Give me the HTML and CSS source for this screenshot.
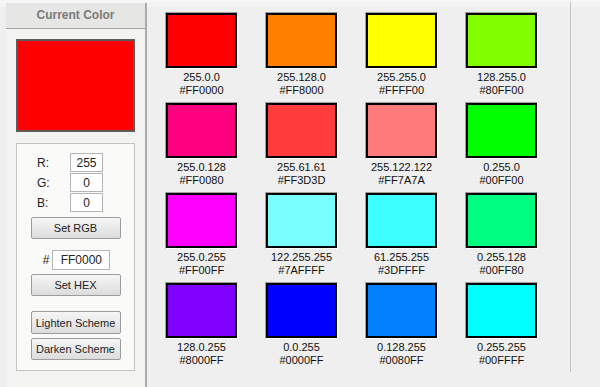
FILE: index.html
```html
<!DOCTYPE html>
<html>
<head>
<title>Color Scheme</title>
<link rel="stylesheet" href="styles.css">
</head>
<body>
<div class="side">
  <div class="side-head">Current Color</div>
  <div class="current" id="current"></div>

  <div class="controls">
    <div class="field"><label for="r">R:</label><input id="r" type="text" value="255"></div>
    <div class="field"><label for="g">G:</label><input id="g" type="text" value="0"></div>
    <div class="field"><label for="b">B:</label><input id="b" type="text" value="0"></div>
    <button class="btn">Set RGB</button>

    <div class="hex-row"><span>#</span><input id="hex" type="text" value="FF0000"></div>
    <button class="btn">Set HEX</button>

    <button class="btn scheme">Lighten Scheme</button>
    <button class="btn scheme-2">Darken Scheme</button>
  </div>
</div>

<div class="palette">
  <div class="item"><div class="swatch" style="background:#FF0000"></div><p>255.0.0<br>#FF0000</p></div>
  <div class="item"><div class="swatch" style="background:#FF8000"></div><p>255.128.0<br>#FF8000</p></div>
  <div class="item"><div class="swatch" style="background:#FFFF00"></div><p>255.255.0<br>#FFFF00</p></div>
  <div class="item"><div class="swatch" style="background:#80FF00"></div><p>128.255.0<br>#80FF00</p></div>

  <div class="item"><div class="swatch" style="background:#FF0080"></div><p>255.0.128<br>#FF0080</p></div>
  <div class="item"><div class="swatch" style="background:#FF3D3D"></div><p>255.61.61<br>#FF3D3D</p></div>
  <div class="item"><div class="swatch" style="background:#FF7A7A"></div><p>255.122.122<br>#FF7A7A</p></div>
  <div class="item"><div class="swatch" style="background:#00FF00"></div><p>0.255.0<br>#00FF00</p></div>

  <div class="item"><div class="swatch" style="background:#FF00FF"></div><p>255.0.255<br>#FF00FF</p></div>
  <div class="item"><div class="swatch" style="background:#7AFFFF"></div><p>122.255.255<br>#7AFFFF</p></div>
  <div class="item"><div class="swatch" style="background:#3DFFFF"></div><p>61.255.255<br>#3DFFFF</p></div>
  <div class="item"><div class="swatch" style="background:#00FF80"></div><p>0.255.128<br>#00FF80</p></div>

  <div class="item"><div class="swatch" style="background:#8000FF"></div><p>128.0.255<br>#8000FF</p></div>
  <div class="item"><div class="swatch" style="background:#0000FF"></div><p>0.0.255<br>#0000FF</p></div>
  <div class="item"><div class="swatch" style="background:#0080FF"></div><p>0.128.255<br>#0080FF</p></div>
  <div class="item"><div class="swatch" style="background:#00FFFF"></div><p>0.255.255<br>#00FFFF</p></div>
</div>
</body>
</html>
```

FILE: styles.css
```css
html, body {
  height: 100%;
}
body {
  margin: 0;
  font-family: "Liberation Sans", Arial, sans-serif;
  background: linear-gradient(#f4f4f4 0, #f4f4f4 7px, #eeefee 7px);
  display: flex;
  align-items: flex-start;
  border-top: 2px solid #f6f6f6;
  box-sizing: border-box;
}
.side {
  align-self: stretch;
  width: 139px;
  margin-left: 6px;
  margin-top: 1px;
  background: #f3f3f1;
  border-right: 2px solid #ababab;
}
.side-head {
  height: 25px;
  line-height: 25px;
  background: #e6e6e4;
  border-bottom: 1px solid #a3a3a3;
  text-align: center;
  font-size: 12px;
  font-weight: bold;
  color: #7a7a7a;
}
.current {
  height: 93px;
  margin: 10px 10px 0;
  box-sizing: border-box;
  background: #ff0000;
  border: 2px solid #5c5c5c;
}
.controls {
  margin: 11px 10px 0;
  padding: 9px 0 10px;
  background: #fafaf8;
  border: 1px solid #c4c4c4;
  display: flex;
  flex-direction: column;
  align-items: center;
}
.field {
  display: flex;
  align-items: center;
  width: 100%;
  padding-left: 20px;
  box-sizing: border-box;
  margin-bottom: 1px;
}
.field label {
  width: 33px;
  font-size: 12px;
  color: #222;
}
input[type="text"] {
  height: 19px;
  box-sizing: border-box;
  border: 1px solid #b5b5b5;
  padding: 0;
  text-align: center;
  font-family: "Liberation Sans", Arial, sans-serif;
  font-size: 12px;
  color: #222;
  background: #fff;
}
.field input {
  width: 33px;
}
.btn {
  width: 90px;
  height: 22px;
  margin-top: 4px;
  border: 1px solid #9c9c9c;
  border-radius: 2px;
  background: linear-gradient(#f6f6f6, #dcdcdc);
  font-family: "Liberation Sans", Arial, sans-serif;
  font-size: 11px;
  color: #222;
  padding: 0;
}
.hex-row {
  display: flex;
  align-items: center;
  gap: 3px;
  margin-top: 11px;
  margin-left: 2px;
  font-size: 12px;
  color: #222;
}
.hex-row input {
  width: 58px;
  height: 20px;
}
.scheme {
  margin-top: 15px;
  height: 23px;
}
.scheme-2 {
  margin-top: 4px;
}
.palette {
  padding: 10px 32px 5px 18px;
  border-right: 1px solid #c2c2c2;
  display: grid;
  grid-template-columns: repeat(4, 73px);
  column-gap: 27px;
  row-gap: 5px;
}
.item {
  display: flex;
  flex-direction: column;
  align-items: center;
}
.swatch {
  width: 73px;
  height: 57px;
  box-sizing: border-box;
  border: 1px solid;
  border-color: #a0a0a0 #fff #fff #a0a0a0;
  box-shadow: inset 0 0 0 2px #000;
}
.item p {
  margin: 2px 0 0;
  font-size: 11px;
  line-height: 13px;
  color: #111;
  text-align: center;
  white-space: nowrap;
}
```
